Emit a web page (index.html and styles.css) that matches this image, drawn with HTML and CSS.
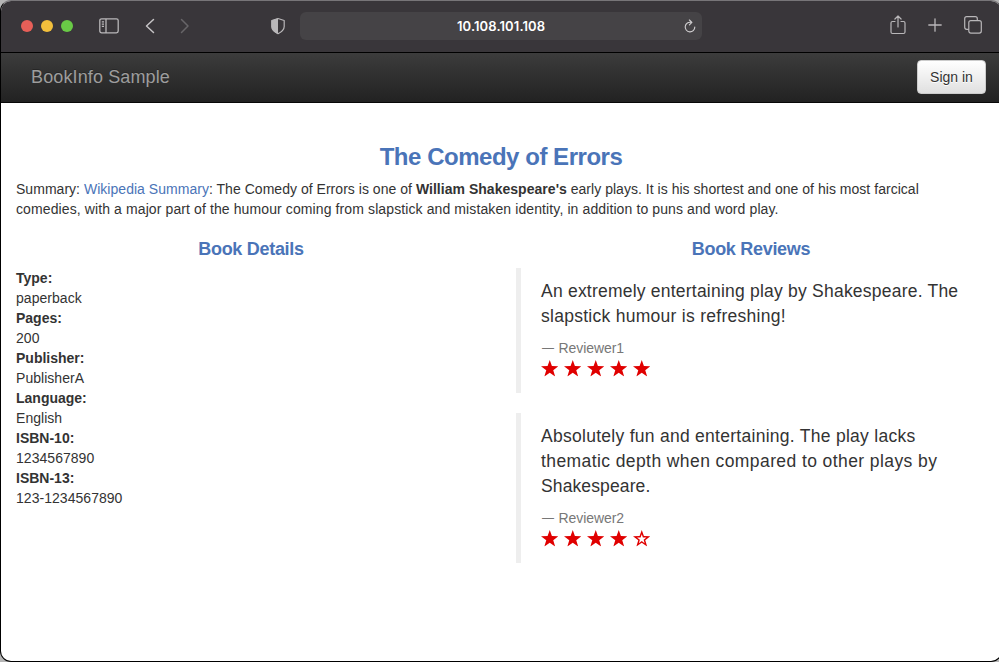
FILE: index.html
```html
<!DOCTYPE html>
<html lang="en">
<head>
<meta charset="utf-8">
<title>Simple Bookstore App</title>
<link rel="stylesheet" href="styles.css">
</head>
<body>
<svg class="defs" width="0" height="0" aria-hidden="true">
  <symbol id="star" viewBox="0 0 17 16"><path d="M8.500 0l2.100 5.900 6.400.1-5.100 3.850L13.750 16 8.500 12.300 3.250 16l1.850-6.150L0 6l6.400-.1z"/></symbol>
  <symbol id="star-open" viewBox="0 0 17 16"><path fill-rule="evenodd" d="M8.500 0l2.100 5.900 6.400.1-5.100 3.850L13.750 16 8.500 12.300 3.250 16l1.850-6.150L0 6l6.400-.1zM8.500 4.100L7.400 7.300 3.900 7.350l2.800 2.100-1 3.300 2.800-2 2.800 2-1-3.300 2.800-2.100-3.500-.05z"/></symbol>
</svg>
<div class="window">
  <header class="toolbar">
    <div class="tools-left">
      <span class="light red"></span><span class="light yellow"></span><span class="light green"></span>
      <svg class="sidebar-icon" width="20" height="16" viewBox="0 0 20 16" fill="none" stroke="#b9b7b9" stroke-width="1.300"><rect x=".8" y=".8" width="18.400" height="14" rx="1.800"/><path d="M7 1v14M2.800 3.800h2.200M2.800 6.100h2.200M2.800 8.400h2.200"/></svg>
      <svg class="back-icon" width="10" height="16" viewBox="0 0 10 16" fill="none" stroke="#c5c3c5" stroke-width="1.500" stroke-linecap="round" stroke-linejoin="round"><path d="M8.500 1.500L1.500 8l7 6.500"/></svg>
      <svg class="forward-icon" width="10" height="16" viewBox="0 0 10 16" fill="none" stroke="#676568" stroke-width="1.500" stroke-linecap="round" stroke-linejoin="round"><path d="M1.500 1.500L8 8l-6.500 6.500"/></svg>
    </div>
    <svg class="shield-icon" width="16" height="18" viewBox="0 0 16 18"><path d="M8 1.500l6.200 2v6c0 3.200-2.400 5.300-6.200 7.200-3.800-1.900-6.200-4-6.200-7.200v-6z" fill="none" stroke="#b9b7b9" stroke-width="1.200" stroke-linejoin="round"/><path d="M8 1.200L1.500 3.400v6c0 3.300 2.500 5.500 6.500 7.500z" fill="#b9b7b9"/></svg>
    <div class="address">
      <span class="url">10.108.101.108</span>
      <svg class="reload" width="12" height="14" viewBox="0 0 12 14" fill="none" stroke="#d0ced0" stroke-width="1.150" stroke-linecap="round" stroke-linejoin="round"><path d="M7.200 3.400A4.800 4.800 0 1 0 10.800 8M5.400 1l2.500 2.400-2.500 2.400"/></svg>
    </div>
    <div class="tools-right">
      <svg width="16" height="20" viewBox="0 0 16 20" fill="none" stroke="#b9b7b9" stroke-width="1.200" stroke-linecap="round" stroke-linejoin="round"><path d="M5 6.500H2.500Q1 6.500 1 8v9q0 1.500 1.500 1.500h11Q15 18.500 15 17V8q0-1.500-1.500-1.500H11M8 12V1.200M4.900 4L8 1l3.100 3"/></svg>
      <svg width="14" height="14" viewBox="0 0 14 14" fill="none" stroke="#b9b7b9" stroke-width="1.300" stroke-linecap="round"><path d="M7 .8v12.400M.8 7h12.400"/></svg>
      <svg width="18" height="18" viewBox="0 0 18 18" fill="none" stroke="#b9b7b9" stroke-width="1.200" stroke-linejoin="round"><rect x="4.800" y="4.600" width="12.500" height="12.500" rx="2"/><path d="M4.800 13.300H2.700q-2 0-2-2V2.700q0-2 2-2h8.600q2 0 2 2v1.900"/></svg>
    </div>
  </header>
  <nav class="navbar">
    <a class="brand">BookInfo Sample</a>
    <button class="sign-in">Sign in</button>
  </nav>
  <main class="page">
    <h3 class="title">The Comedy of Errors</h3>
    <p class="summary"><span class="line-one">Summary: <a class="link">Wikipedia Summary</a>: The Comedy of Errors is one of <b>William Shakespeare's</b> early plays. It is his shortest and one of his most farcical</span><br><span class="line-two">comedies, with a major part of the humour coming from slapstick and mistaken identity, in addition to puns and word play.</span></p>
    <div class="columns">
      <section class="column">
        <h4 class="heading">Book Details</h4>
        <dl class="details">
          <dt>Type:</dt><dd>paperback</dd>
          <dt>Pages:</dt><dd>200</dd>
          <dt>Publisher:</dt><dd>PublisherA</dd>
          <dt>Language:</dt><dd>English</dd>
          <dt>ISBN-10:</dt><dd>1234567890</dd>
          <dt>ISBN-13:</dt><dd>123-1234567890</dd>
        </dl>
      </section>
      <section class="column">
        <h4 class="heading">Book Reviews</h4>
        <blockquote class="review">
          <p>An extremely entertaining play by Shakespeare. The<br><span class="wide">slapstick humour is refreshing!</span></p>
          <small><span class="dash">—</span>Reviewer1</small>
          <div class="stars"><svg><use href="#star"/></svg><svg><use href="#star"/></svg><svg><use href="#star"/></svg><svg><use href="#star"/></svg><svg><use href="#star"/></svg></div>
        </blockquote>
        <blockquote class="review">
          <p><span class="wide">Absolutely fun and entertaining. The play lacks</span><br><span class="wider">thematic depth when compared to other plays by</span><br><span class="narrow">Shakespeare.</span></p>
          <small><span class="dash">—</span>Reviewer2</small>
          <div class="stars"><svg><use href="#star"/></svg><svg><use href="#star"/></svg><svg><use href="#star"/></svg><svg><use href="#star"/></svg><svg><use href="#star-open"/></svg></div>
        </blockquote>
      </section>
    </div>
  </main>
</div>
</body>
</html>
```
FILE: styles.css
```css
* { box-sizing: border-box; }
html { height: 100%; overflow: hidden; background: #b5b5b5; }
body {
  margin: 0;
  height: 662px;
  overflow: hidden;
  font: 14px/20px "Liberation Sans", Arial, sans-serif;
  color: #333;
}
.defs { position: absolute; }
.window {
  width: 1002px;
  height: 662px;
  border: 1px solid #000;
  border-top-color: #777578;
  border-radius: 11px;
  background: #fff;
  overflow: hidden;
}
.toolbar {
  display: flex;
  align-items: center;
  height: 52px;
  padding: 0 19px 2px 20px;
  background: #39363a;
  border-bottom: 1px solid #000;
}
.tools-left { display: flex; align-items: center; width: 249px; }
.light { width: 12px; height: 12px; margin-right: 8px; border-radius: 50%; }
.red { background: #e75f58; }
.yellow { background: #f2bf3c; }
.green { background: #69ca46; }
.sidebar-icon { margin-left: 18px; }
.back-icon { margin-left: 26px; }
.forward-icon { margin-left: 25px; }
.shield-icon { margin-right: 14px; }
.address {
  display: flex;
  align-items: center;
  justify-content: space-between;
  width: 402px;
  height: 28px;
  padding: 0 6px 0 157px;
  border-radius: 6px;
  background: #454346;
}
.url { font: 600 13px/28px Inter, sans-serif; color: #fff; letter-spacing: .1px; }
.tools-right { display: flex; align-items: center; gap: 22px; margin: -1px 0 0 auto; }
.navbar {
  display: flex;
  align-items: center;
  justify-content: space-between;
  height: 50px;
  padding: 0 15px 2px 30px;
  border-bottom: 1px solid #080808;
  background: linear-gradient(#3c3c3c, #222);
}
.brand { font-size: 18px; letter-spacing: .12px; color: #9d9d9d; text-shadow: 0 -1px 0 rgba(0, 0, 0, .25); }
.sign-in {
  width: 69px;
  height: 34px;
  padding: 0;
  border: 1px solid #ccc;
  border-radius: 4px;
  background: linear-gradient(#fff, #e0e0e0);
  color: #333;
  font: inherit;
  text-shadow: 0 1px 0 #fff;
}
.page { padding: 41px 15px 0; }
.title { margin: 0 0 9px; font-size: 24px; line-height: 26px; letter-spacing: -.47px; text-align: center; color: #4a74b8; }
.summary { margin: 0 0 10px; white-space: nowrap; }
.line-one { letter-spacing: .03px; }
.line-two { letter-spacing: .107px; }
.link { color: #4a74b8; }
.columns { display: grid; grid-template-columns: 1fr 1fr; gap: 30px; }
.heading { margin: 11px 0 9px; font-size: 18px; line-height: 19px; letter-spacing: -.3px; text-align: center; color: #4a74b8; }
.details { margin: 0; }
.details dt { font-weight: 700; }
.details dd { margin: 0; letter-spacing: .04px; }
.review {
  margin: 0 0 20px;
  padding: 11px 20px 10px;
  border-left: 5px solid #eee;
  font-size: 17.5px;
  line-height: 25px;
}
.review p { margin: 0 0 9px; white-space: nowrap; letter-spacing: .22px; }
.review p .wide { letter-spacing: .275px; }
.review p .wider { letter-spacing: .41px; }
.review p .narrow { letter-spacing: .12px; }
.review small { display: flex; align-items: center; font-size: 14px; line-height: 20px; letter-spacing: -.07px; color: #777; }
.dash { width: 17.5px; padding-left: 1px; font-size: 12px; }
.stars { display: flex; gap: 5.5px; height: 25px; padding-top: 2.3px; margin-left: -.2px; }
.stars svg { width: 17.5px; height: 16.5px; fill: #e00000; }
```
